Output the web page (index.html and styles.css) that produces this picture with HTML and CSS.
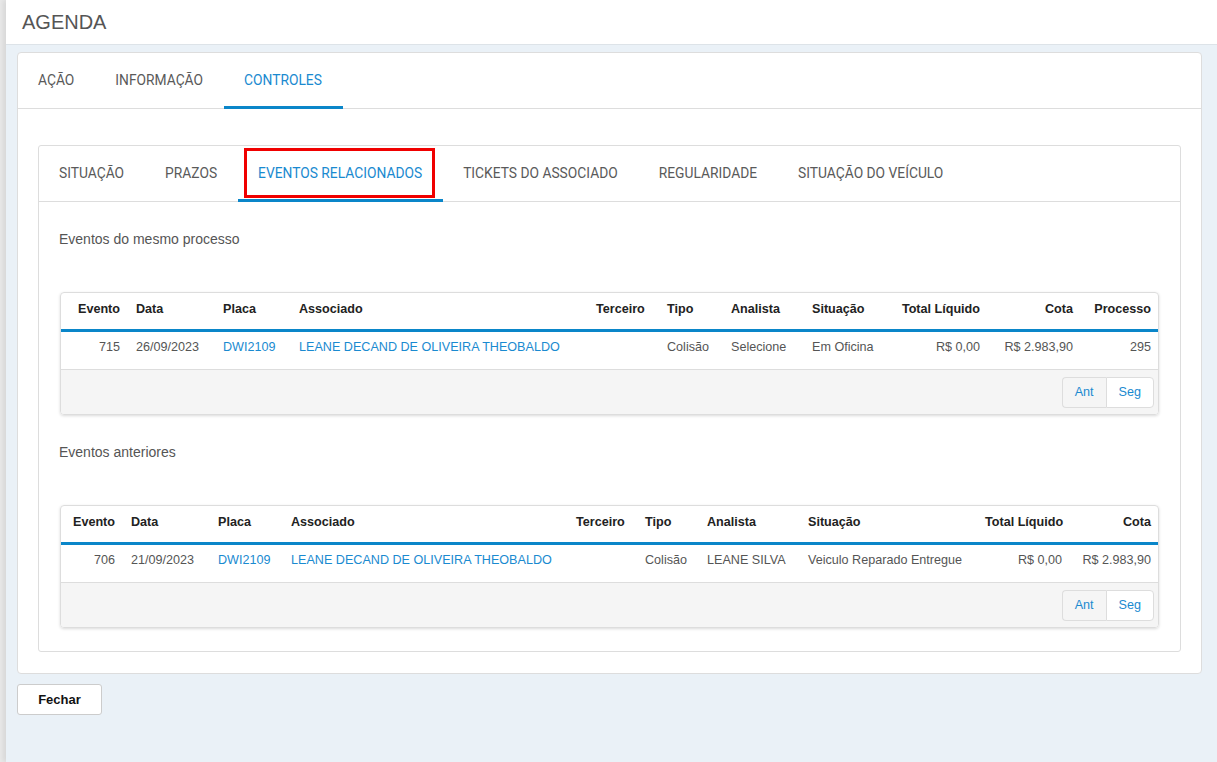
FILE: index.html
```html
<!DOCTYPE html>
<html lang="pt-BR">
<head>
    <meta charset="UTF-8">
    <meta name="viewport" content="width=device-width, initial-scale=1.0">
    <title>Agenda</title>
    <link rel="stylesheet" href="styles.css">
</head>
<body>

    <div class="modal">
        <div class="modal-header">
            <h1>AGENDA</h1>
        </div>

        <div class="modal-body">
            <div class="card">
                <ul class="tabs">
                    <li>AÇÃO</li>
                    <li>INFORMAÇÃO</li>
                    <li class="active">CONTROLES</li>
                </ul>

                <div class="card-body">
                    <div class="card inner">
                        <ul class="tabs">
                            <li>SITUAÇÃO</li>
                            <li>PRAZOS</li>
                            <li class="active marked">EVENTOS RELACIONADOS</li>
                            <li>TICKETS DO ASSOCIADO</li>
                            <li>REGULARIDADE</li>
                            <li>SITUAÇÃO DO VEÍCULO</li>
                        </ul>

                        <div class="tab-content">
                            <p class="section-title">Eventos do mesmo processo</p>
                            <div class="grid-panel">
                                <table class="grid">
                                    <colgroup>
                                        <col style="width: 67px">
                                        <col style="width: 87px">
                                        <col style="width: 76px">
                                        <col style="width: 297px">
                                        <col style="width: 71px">
                                        <col style="width: 64px">
                                        <col style="width: 81px">
                                        <col style="width: 86px">
                                        <col style="width: 98px">
                                        <col style="width: 93px">
                                        <col style="width: 78px">
                                    </colgroup>
                                    <thead>
                                        <tr>
                                            <th class="num">Evento</th>
                                            <th>Data</th>
                                            <th>Placa</th>
                                            <th>Associado</th>
                                            <th>Terceiro</th>
                                            <th>Tipo</th>
                                            <th>Analista</th>
                                            <th>Situação</th>
                                            <th class="num">Total Líquido</th>
                                            <th class="num">Cota</th>
                                            <th class="num">Processo</th>
                                        </tr>
                                    </thead>
                                    <tbody>
                                        <tr>
                                            <td class="num">715</td>
                                            <td>26/09/2023</td>
                                            <td><a href="#">DWI2109</a></td>
                                            <td><a href="#">LEANE DECAND DE OLIVEIRA THEOBALDO</a></td>
                                            <td></td>
                                            <td>Colisão</td>
                                            <td>Selecione</td>
                                            <td>Em Oficina</td>
                                            <td class="num">R$ 0,00</td>
                                            <td class="num">R$ 2.983,90</td>
                                            <td class="num">295</td>
                                        </tr>
                                    </tbody>
                                </table>
                                <div class="grid-footer">
                                    <div class="pager">
                                        <button class="disabled">Ant</button>
                                        <button>Seg</button>
                                    </div>
                                </div>
                            </div>

                            <p class="section-title">Eventos anteriores</p>
                            <div class="grid-panel">
                                <table class="grid">
                                    <colgroup>
                                        <col style="width: 62px">
                                        <col style="width: 87px">
                                        <col style="width: 73px">
                                        <col style="width: 285px">
                                        <col style="width: 69px">
                                        <col style="width: 62px">
                                        <col style="width: 101px">
                                        <col style="width: 177px">
                                        <col style="width: 93px">
                                        <col style="width: 89px">
                                    </colgroup>
                                    <thead>
                                        <tr>
                                            <th class="num">Evento</th>
                                            <th>Data</th>
                                            <th>Placa</th>
                                            <th>Associado</th>
                                            <th>Terceiro</th>
                                            <th>Tipo</th>
                                            <th>Analista</th>
                                            <th>Situação</th>
                                            <th class="num">Total Líquido</th>
                                            <th class="num">Cota</th>
                                        </tr>
                                    </thead>
                                    <tbody>
                                        <tr>
                                            <td class="num">706</td>
                                            <td>21/09/2023</td>
                                            <td><a href="#">DWI2109</a></td>
                                            <td><a href="#">LEANE DECAND DE OLIVEIRA THEOBALDO</a></td>
                                            <td></td>
                                            <td>Colisão</td>
                                            <td>LEANE SILVA</td>
                                            <td>Veiculo Reparado Entregue</td>
                                            <td class="num">R$ 0,00</td>
                                            <td class="num">R$ 2.983,90</td>
                                        </tr>
                                    </tbody>
                                </table>
                                <div class="grid-footer">
                                    <div class="pager">
                                        <button class="disabled">Ant</button>
                                        <button>Seg</button>
                                    </div>
                                </div>
                            </div>
                        </div>
                    </div>
                </div>
            </div>

            <button class="btn-close">Fechar</button>
        </div>
    </div>

</body>
</html>
```

FILE: styles.css
```css
:root {
    --blue: #1a8ad0;
    --line: #dddddd;
    --text: #555555;
}

html, body {
    height: 100%;
}

body {
    margin: 0;
    font-family: 'Liberation Sans', Arial, sans-serif;
    font-size: 13px;
    color: var(--text);
    background: #e9e9e9;
}

/* Modal */
.modal {
    margin-left: 6px;
    min-height: 100%;
    background: #eaf1f7;
    box-shadow: -3px 0 5px rgba(0,0,0,0.08);
}

.modal-header {
    height: 44px;
    background: white;
    border-bottom: 1px solid #dde3e8;
    display: flex;
    align-items: center;
    padding-left: 16px;
}

.modal-header h1 {
    margin: 0;
    font-size: 20px;
    font-weight: normal;
    color: #555;
}

.modal-body {
    padding: 7px 15px 0 11px;
}

/* Cards & Tabs */
.card {
    background: white;
    border: 1px solid var(--line);
    border-radius: 4px;
}

.card.inner {
    border-radius: 3px;
}

.card-body {
    padding: 36px 20px 21px 20px;
}

.tabs {
    list-style: none;
    margin: 0;
    padding: 0;
    display: flex;
    height: 55px;
    border-bottom: 1px solid var(--line);
}

.tabs li {
    position: relative;
    display: flex;
    align-items: center;
    padding: 0 21px 2px 20px;
    font-family: Roboto, 'Liberation Sans', sans-serif;
    font-size: 13.8px;
    color: #5a5a5a;
    cursor: pointer;
}

.tabs li.active {
    color: var(--blue);
    margin-bottom: -1px;
    border-bottom: 3px solid #0a86c9;
    padding-bottom: 0;
}

/* annotation box round the active inner tab */
.tabs li.marked::after {
    content: "";
    position: absolute;
    top: 2px;
    left: 6px;
    right: 8px;
    bottom: 1px;
    border: 3px solid #f00000;
}

.tab-content {
    padding: 27px 21px 23px 21px;
}

.section-title {
    margin: 0 0 43px -1px;
    font-size: 14px;
    line-height: 20px;
    color: #555;
}

.grid-panel + .section-title {
    margin-top: 27px;
}

/* Grids */
.grid-panel {
    border: 1px solid var(--line);
    border-radius: 4px;
    overflow: hidden;
    box-shadow: 0 1px 3px rgba(0,0,0,0.15);
}

.grid {
    width: 100%;
    table-layout: fixed;
    border-collapse: collapse;
    font-size: 12.6px;
}

.grid th {
    height: 32px;
    padding: 0 8px 4px 8px;
    text-align: left;
    font-weight: bold;
    color: #222;
    white-space: nowrap;
    border-bottom: 3px solid #0a86c9;
}

.grid td {
    height: 30px;
    padding: 0 8px 7px 8px;
    white-space: nowrap;
    border-bottom: 1px solid var(--line);
}

.grid .num {
    text-align: right;
}

.grid a {
    color: var(--blue);
    text-decoration: none;
}

.grid-footer {
    background: #f5f5f5;
    height: 44px;
    display: flex;
    align-items: center;
    justify-content: flex-end;
    padding-right: 4px;
}

.pager {
    display: flex;
}

.pager button {
    height: 31px;
    padding: 0 12px;
    font-family: inherit;
    font-size: 12.6px;
    color: var(--blue);
    background: white;
    border: 1px solid var(--line);
    cursor: pointer;
}

.pager button:first-child {
    border-radius: 4px 0 0 4px;
    border-right: none;
}

.pager button:last-child {
    border-radius: 0 4px 4px 0;
}

.pager button.disabled {
    background: #f5f5f5;
}

/* Footer button */
.btn-close {
    margin-top: 10px;
    width: 85px;
    height: 31px;
    background: white;
    border: 1px solid #cccccc;
    border-radius: 3px;
    font-family: inherit;
    font-size: 13px;
    font-weight: bold;
    color: #111;
    cursor: pointer;
}
```
